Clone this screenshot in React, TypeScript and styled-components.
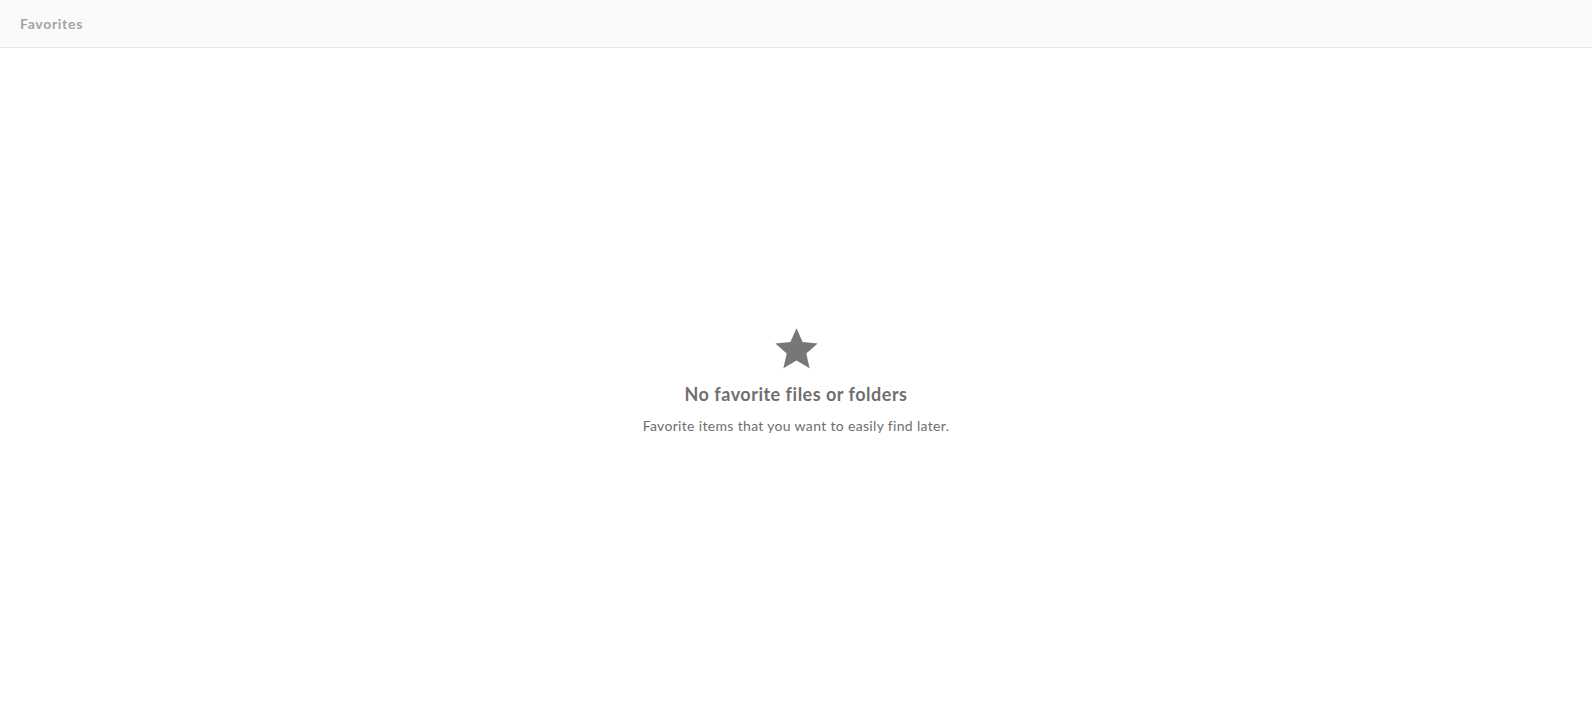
import React from 'react';
import styled, {createGlobalStyle} from 'styled-components';

const GlobalStyle = createGlobalStyle`
  html, body, #root {
    margin: 0;
    height: 100%;
  }
  body {
    font-family: Lato, "Open Sans", sans-serif;
    background: #ffffff;
  }
`;

const Page = styled.div`
  display: flex;
  flex-direction: column;
  height: 100%;
`;

const Header = styled.header`
  display: flex;
  align-items: center;
  height: 47px;
  padding: 0 20px;
  background: #fafafa;
  border-bottom: 1px solid #e6e6e6;
  flex-shrink: 0;
`;

const Title = styled.h1`
  margin: 0;
  font-size: 14px;
  font-weight: 700;
  letter-spacing: 0.7px;
  color: #a3a3a3;
`;

const Body = styled.main`
  flex: 1;
  display: flex;
  align-items: center;
  justify-content: center;
`;

const Empty = styled.div`
  display: flex;
  flex-direction: column;
  align-items: center;
  text-align: center;
`;

const Heading = styled.h2`
  margin: 11px 0 0;
  font-size: 18px;
  font-weight: 700;
  letter-spacing: 0.5px;
  color: #707070;
`;

const Hint = styled.p`
  margin: 12px 0 0;
  font-size: 14px;
  letter-spacing: 0.33px;
  color: #6e6e6e;
`;

const Star = () => (
	<svg width="47" height="47" viewBox="0 0 24 24" fill="#777777">
		<path d="M12 1.6l3.1 7.1 7.7.7-5.8 5.1 1.7 7.6L12 18.1l-6.7 4 1.7-7.6-5.8-5.1 7.7-.7z"/>
	</svg>
);

export default function App() {
	return (
		<Page>
			<GlobalStyle/>
			<Header>
				<Title>Favorites</Title>
			</Header>
			<Body>
				<Empty>
					<Star/>
					<Heading>No favorite files or folders</Heading>
					<Hint>Favorite items that you want to easily find later.</Hint>
				</Empty>
			</Body>
		</Page>
	);
}
